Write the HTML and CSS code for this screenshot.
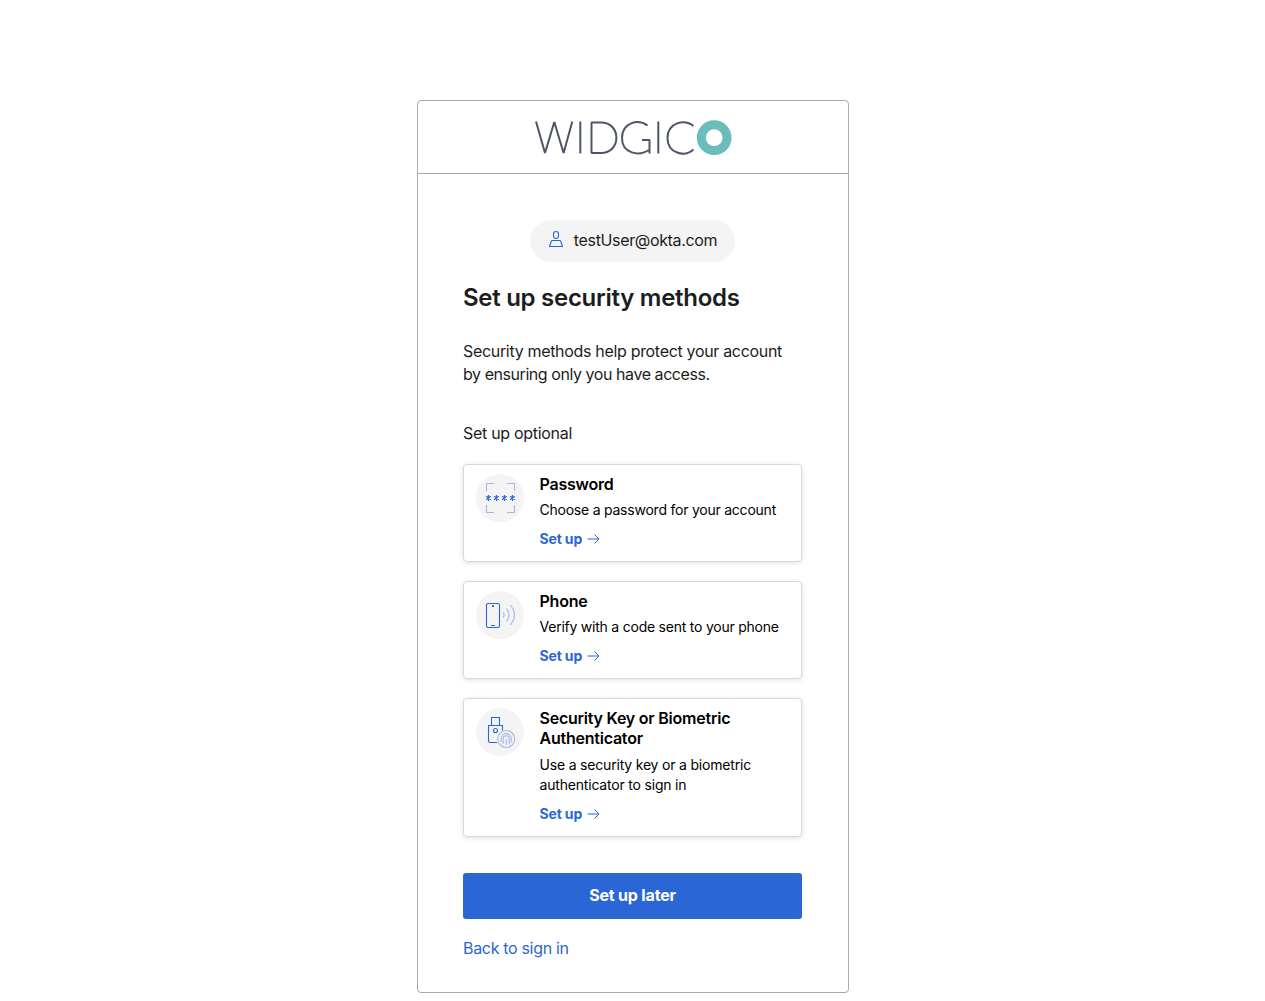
FILE: index.html
```html
<!DOCTYPE html>
<html lang="en">
<head>
<meta charset="utf-8">
<title>Set up security methods</title>
<link rel="stylesheet" href="styles.css">
</head>
<body>
<main class="card">
  <header class="brand">
    <svg width="200" height="40" viewBox="533 117 200 40" role="img" aria-label="Widgico">
      <path class="brand-letters" d="M536 121.500l9 31.500 9.300-31 9.300 31 8.700-31.500M580.300 121.500v32M591.500 122.500v30.500h9.500c20.500 0 20.500-30.500 0-30.500zM647.500 125.500c-9.500-7-25.500-3-25.500 12.500s17 19 27.500 11.500M649.500 153.500v-13.500h-7.500M658.300 121.500v32M693.500 126c-9-7.500-26-3.500-26 12s17 19.500 26 11.500"/>
      <circle class="brand-ring" cx="714.200" cy="137.700" r="12.900"/>
    </svg>
  </header>
  <section class="content">
    <div class="user">
      <svg width="16" height="18" viewBox="0 0 16 18"><rect x="5.500" y="1.500" width="5" height="7" rx="2.500"/><path d="M4.500 10.500h7q1 0 1.300 1l1.700 5h-13l1.700-5q.3-1 1.300-1z"/></svg>
      <span>testUser@okta.com</span>
    </div>
    <h1>Set up security methods</h1>
    <p class="intro">Security methods help protect your account<br><span>by ensuring only you have access.</span></p>
    <p class="label">Set up optional</p>
    <div class="methods">
      <article class="method">
        <div class="icon"><svg width="48" height="48" viewBox="0 0 48 48"><path class="soft" d="M10.500 17v-7.500h7.500M31 9.500h7.500v7.500M10.500 31v7.500h7.500M31 38.500h7.500v-7.500"/><path class="stars" d="M12.500 21v6M10.200 22.200l4.600 3.600M10.200 25.800l4.600-3.600M20.500 21v6M18.200 22.200l4.600 3.600M18.200 25.800l4.600-3.600M28.500 21v6M26.200 22.200l4.600 3.600M26.200 25.800l4.600-3.600M36.500 21v6M34.200 22.200l4.600 3.600M34.200 25.800l4.600-3.600"/></svg></div>
        <div><h2>Password</h2><p>Choose a password for your account</p><a>Set up <svg class="arrow" viewBox="0 0 13 12"><path d="M.5 6h11.500M7.500 1.500l4.500 4.500-4.500 4.500"/></svg></a></div>
      </article>
      <article class="method">
        <div class="icon"><svg width="48" height="48" viewBox="0 0 48 48"><rect x="10.500" y="12.500" width="13" height="24" rx="1.500"/><path d="M15 34.500h4M16 14.800h2"/><path d="M16 15.400h2"/><path class="soft" d="M27 21.500q2.500 2.500 0 5M30.500 17.500q5 6.500 0 13M34.300 14q8.200 10 0 20"/></svg></div>
        <div><h2>Phone</h2><p>Verify with a code sent to your phone</p><a>Set up <svg class="arrow" viewBox="0 0 13 12"><path d="M.5 6h11.500M7.500 1.500l4.500 4.500-4.500 4.500"/></svg></a></div>
      </article>
      <article class="method tall">
        <div class="icon"><svg width="48" height="48" viewBox="0 0 48 48"><path d="M15.500 17.500v-8h8v8M21 34.500h-7q-1.500 0-1.500-1.500v-15.500h14v5"/><circle cx="19.500" cy="22.500" r="2"/><g class="soft"><circle cx="30.200" cy="31" r="8.500"/><path d="M25.200 34v-3.500c0-6.500 10-6.500 10 0v4M27.200 36v-5.500c0-3.700 6-3.700 6 0v6M30.200 31v6"/></g></svg></div>
        <div><h2>Security Key or Biometric Authenticator</h2><p>Use a security key or a biometric authenticator to sign in</p><a>Set up <svg class="arrow" viewBox="0 0 13 12"><path d="M.5 6h11.500M7.500 1.500l4.500 4.500-4.500 4.500"/></svg></a></div>
      </article>
    </div>
    <button>Set up later</button>
    <a class="back">Back to sign in</a>
  </section>
</main>
</body>
</html>
```
FILE: styles.css
```css
*{box-sizing:border-box}
body{margin:0;font:16px/23px Inter,sans-serif;letter-spacing:-.32px;color:#1d1d21}
h1,h2,p{margin:0}
svg{flex:none;fill:none;stroke:#2b66d6;stroke-width:1.1}
.card{width:432px;height:893px;margin:100px auto 0 417px;border:1px solid #a7a8b0;border-radius:4px}
.brand{height:73px;border-bottom:1px solid #a7a8b0;padding:16px 115px}
.brand-letters{stroke:#4d5666;stroke-width:2;stroke-linejoin:bevel}
.brand-ring{stroke:#6bbdbd;stroke-width:9}
.content{padding:46px 46px 0 45px;display:flex;flex-direction:column}
.user{align-self:center;height:42px;border-radius:21px;background:#f4f4f4;display:flex;align-items:center;gap:10px;padding:0 18px 2px;letter-spacing:-.35px}
.user svg{margin-bottom:2px}
h1{font-size:24px;line-height:30px;letter-spacing:-.28px;margin-top:21px;font-weight:600}
.intro{margin-top:27px}
.intro span{letter-spacing:-.44px}
.label{margin-top:36px;letter-spacing:-.3px}
.methods{display:grid;gap:19px;margin-top:19px}
.method{display:flex;gap:15.5px;border:1px solid #d7d7dc;border-radius:4px;padding:9px 12px 13px;box-shadow:0 1px 5px #00000020;color:#000}
.icon{width:48px;height:48px;flex:none;border-radius:50%;background:#f4f4f4}
.soft{stroke:#a7b5ec}
.stars{stroke-width:1.2}
.method h2{font-size:16px;line-height:20px;font-weight:600;letter-spacing:-.23px}
.method p{font-size:14px;line-height:20px;margin-top:6px;letter-spacing:-.23px}
.tall p{margin-top:7px;letter-spacing:-.19px}
.method a{display:flex;align-items:center;gap:5px;height:20px;margin-top:8px;font-weight:700;font-size:14px;color:#2b66d6;letter-spacing:-.15px}
.arrow{width:13px;height:12px;margin-top:1px;stroke-width:1}
button{height:46px;margin-top:36px;padding:0 0 2px;border:0;border-radius:3px;background:#2b66d6;color:#fff;font:700 16px Inter,sans-serif;letter-spacing:-.18px}
.back{margin-top:18px;color:#2b66d6}
```
